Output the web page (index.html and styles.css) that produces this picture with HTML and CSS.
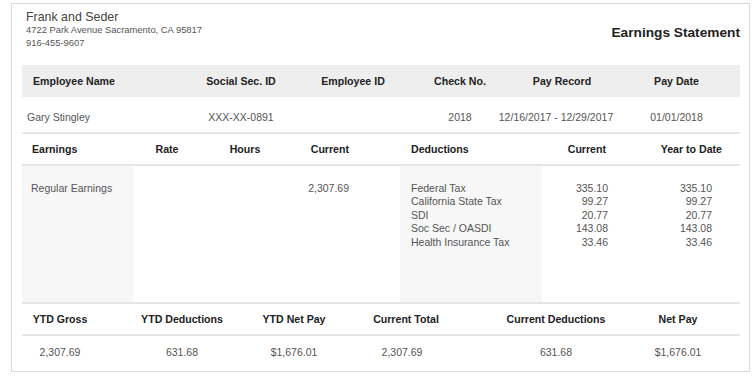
FILE: index.html
```html
<!DOCTYPE html>
<html>
<head>
<meta charset="utf-8">
<link rel="stylesheet" href="styles.css">
</head>
<body>
<div class="card">
  <div class="head">
    <div class="company">
      <div class="co-name">Frank and Seder</div>
      <div class="co-line">4722 Park Avenue Sacramento, CA 95817</div>
      <div class="co-line">916-455-9607</div>
    </div>
    <div class="title">Earnings Statement</div>
  </div>

  <div class="row emp band">
    <div class="th emp-name">Employee Name</div>
    <div class="th">Social Sec. ID</div>
    <div class="th">Employee ID</div>
    <div class="th">Check No.</div>
    <div class="th">Pay Record</div>
    <div class="th">Pay Date</div>
  </div>
  <div class="row emp data-row ruled">
    <div class="td emp-val">Gary Stingley</div>
    <div class="td">XXX-XX-0891</div>
    <div class="td"></div>
    <div class="td">2018</div>
    <div class="td rec-val"><span>12/16/2017 - 12/29/2017</span></div>
    <div class="td">01/01/2018</div>
  </div>

  <div class="row earn head-row ruled">
    <div class="th hd c-earn">Earnings</div>
    <div class="th hd">Rate</div>
    <div class="th hd">Hours</div>
    <div class="th hd c-cur">Current</div>
    <div class="th hd c-ded">Deductions</div>
    <div class="th hd c-dcur-h">Current</div>
    <div class="th hd c-ytd-h">Year to Date</div>
  </div>
  <div class="row earn body-row ruled">
    <div class="td stack shade c-earn-v">Regular Earnings</div>
    <div class="td stack"></div>
    <div class="td stack"></div>
    <div class="td stack c-cur">2,307.69</div>
    <div class="td stack shade c-ded">
      <div>Federal Tax</div>
      <div>California State Tax</div>
      <div>SDI</div>
      <div>Soc Sec / OASDI</div>
      <div>Health Insurance Tax</div>
    </div>
    <div class="td stack c-dcur">
      <div>335.10</div>
      <div>99.27</div>
      <div>20.77</div>
      <div>143.08</div>
      <div>33.46</div>
    </div>
    <div class="td stack c-ytd">
      <div>335.10</div>
      <div>99.27</div>
      <div>20.77</div>
      <div>143.08</div>
      <div>33.46</div>
    </div>
  </div>

  <div class="row ytd head-row ruled">
    <div class="th hd y1">YTD Gross</div>
    <div class="th hd">YTD Deductions</div>
    <div class="th hd">YTD Net Pay</div>
    <div class="th hd">Current Total</div>
    <div class="th hd y5">Current Deductions</div>
    <div class="th hd">Net Pay</div>
  </div>
  <div class="row ytd val-row">
    <div class="td vv y1">2,307.69</div>
    <div class="td vv">631.68</div>
    <div class="td vv">$1,676.01</div>
    <div class="td vv y4v">2,307.69</div>
    <div class="td vv y5">631.68</div>
    <div class="td vv">$1,676.01</div>
  </div>
</div>
</body>
</html>
```

FILE: styles.css
```css
* { box-sizing: border-box; }

body {
  margin: 0;
  background: #ffffff;
  font-family: "Liberation Sans", Arial, sans-serif;
}

.card {
  margin: 3px 0 0 11px;
  width: 739px;
  height: 369px;
  border: 1px solid #dadada;
  padding: 0 9px 0 10px;
  background: #ffffff;
  box-shadow: 0 1px 2px rgba(0, 0, 0, 0.06);
}

.head {
  display: flex;
  justify-content: space-between;
  align-items: flex-start;
  height: 61px;
  padding: 7px 0 0 4px;
}

.co-name {
  font-size: 12.4px;
  line-height: 12px;
  color: #444444;
}

.co-line {
  font-size: 9.4px;
  line-height: 13px;
  color: #555555;
}

.title {
  margin-top: 14px;
  font-size: 13.7px;
  line-height: 16px;
  font-weight: bold;
  color: #222222;
}

.row { display: grid; }

.emp { grid-template-columns: 163px 112px 112px 102px 102px 127px; }
.earn { grid-template-columns: 111px 68px 88px 111px 142px 90px 108px; }
.ytd { grid-template-columns: 100px 120px 104px 120px 150px 124px; }

.ruled { border-bottom: 2px solid #e6e6e6; }

.band {
  height: 32px;
  background: #eeeeee;
}

.th {
  font-size: 10.6px;
  font-weight: bold;
  color: #222222;
  line-height: 32px;
  text-align: center;
  white-space: nowrap;
}

.td {
  font-size: 10.5px;
  color: #555555;
  line-height: 14px;
  text-align: center;
  white-space: nowrap;
}

.emp-name { text-align: left; padding-left: 11px; }

.data-row { height: 37px; }
.data-row .td { padding-top: 13px; }
.emp-val { text-align: left; padding-left: 5px; }
.rec-val {
  display: flex;
  justify-content: center;
  align-items: flex-start;
  padding-right: 12px;
}
.rec-val span { flex: none; }

.head-row { height: 32px; }
.hd { line-height: 14px; padding-top: 8px; }

.body-row { height: 138px; }
.stack { padding-top: 16px; line-height: 13.4px; }
.shade { background: #f7f7f7; }

.c-earn { text-align: left; padding-left: 10px; }
.c-earn-v { text-align: left; padding-left: 9px; }
.c-cur { text-align: right; padding-right: 51px; }
.c-ded { text-align: left; padding-left: 11px; }
.c-dcur-h { text-align: right; padding-right: 26px; }
.c-dcur { text-align: right; padding-right: 24px; }
.c-ytd-h { text-align: right; padding-right: 18px; }
.c-ytd { text-align: right; padding-right: 28px; }

.val-row { height: 35px; }
.vv { padding-top: 9px; }
.y1 { padding-right: 24px; }
.y4v { padding-right: 8px; }
.y5 { padding-left: 30px; }
```
